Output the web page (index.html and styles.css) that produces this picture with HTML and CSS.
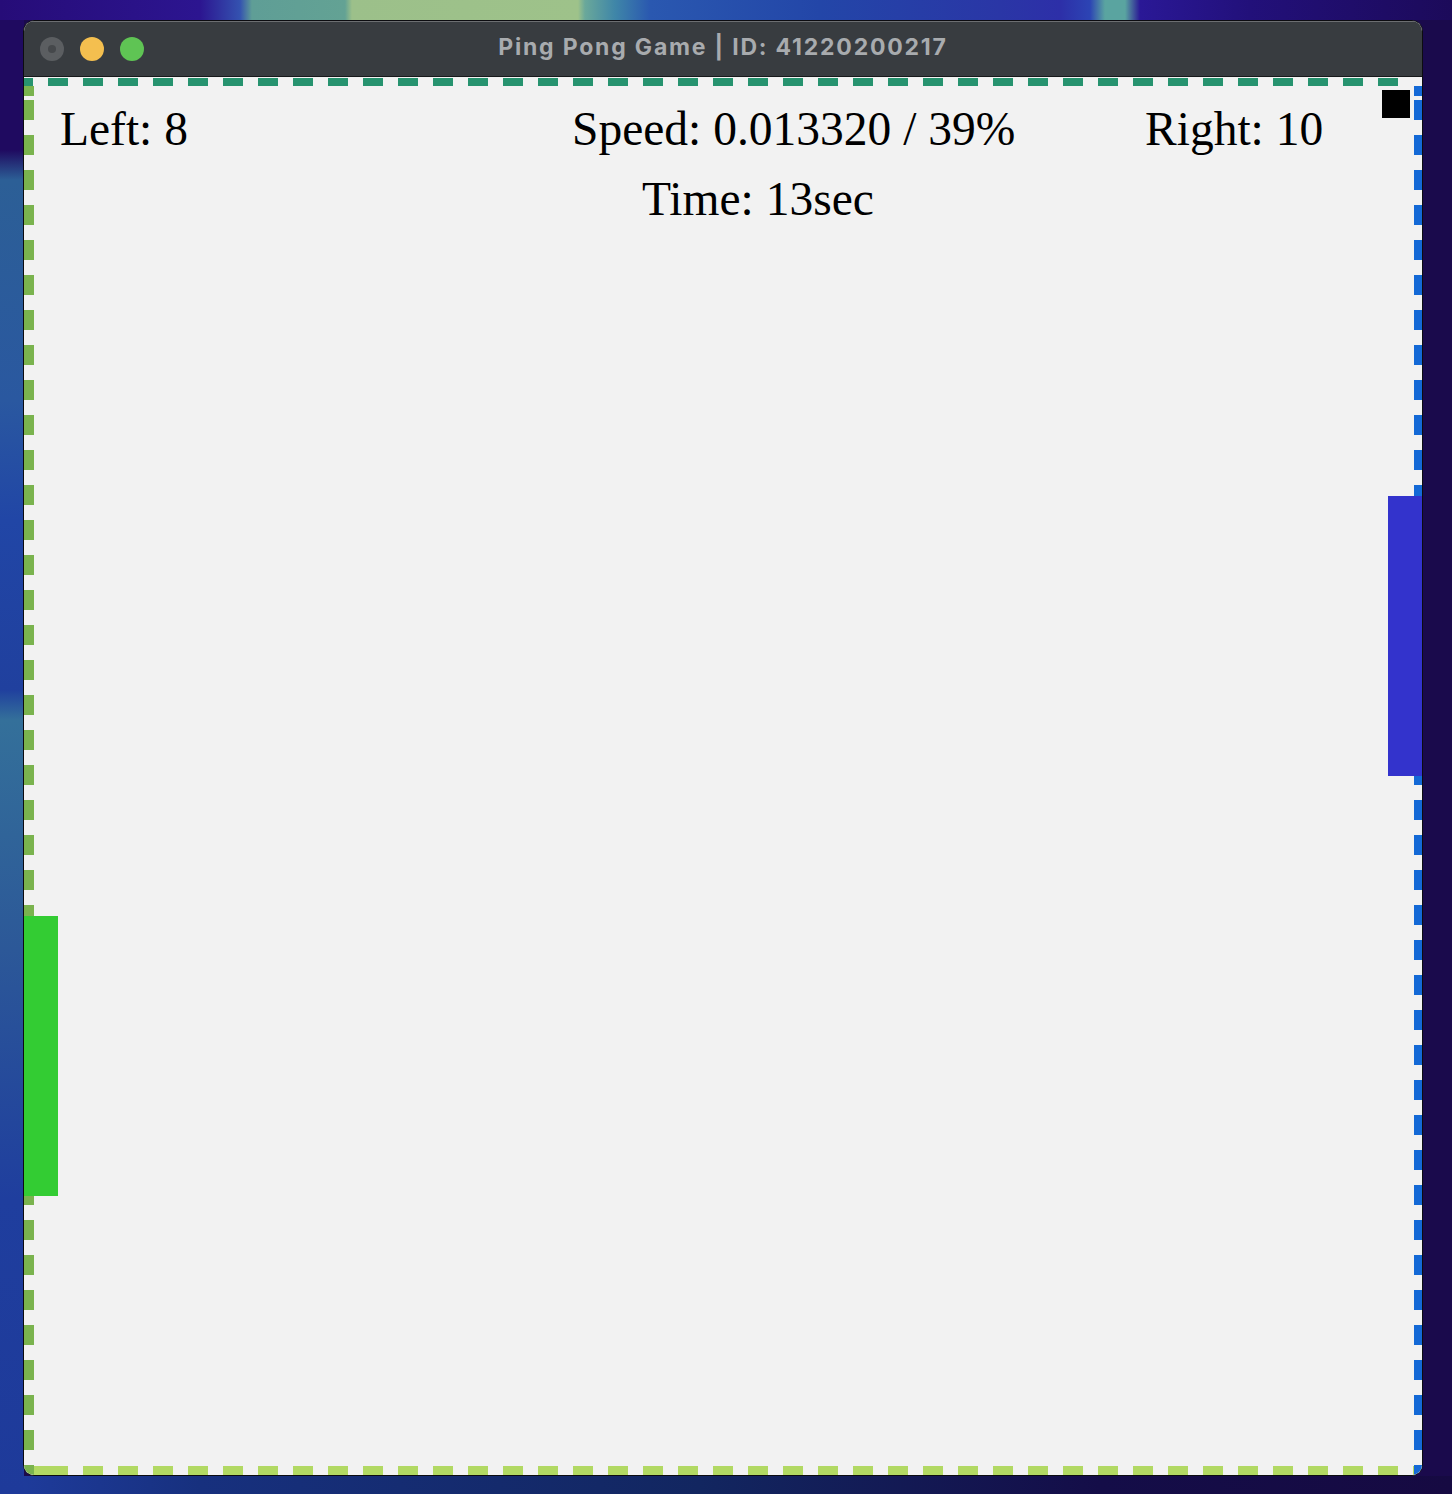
FILE: index.html
```html
<!DOCTYPE html>
<html lang="en">
<head>
<meta charset="utf-8">
<title>Ping Pong Game</title>
<link rel="stylesheet" href="styles.css">
</head>
<body>
<div class="window">
  <div class="titlebar">
    <div class="lights">
      <span class="light light-close"><span class="light-dot"></span></span>
      <span class="light light-min"></span>
      <span class="light light-max"></span>
    </div>
    <div class="title">Ping Pong Game | ID: 41220200217</div>
  </div>
  <div class="court">
    <div class="edge edge-top"></div>
    <div class="edge edge-left"></div>
    <div class="field">
      <div class="hud-row">
        <span class="hud-text">Left: 8</span>
        <span class="hud-text">Speed: 0.013320 / 39%</span>
        <span class="hud-text">Right: 10</span>
      </div>
      <div class="time-row hud-text">Time: 13sec</div>
    </div>
    <div class="edge edge-right"></div>
    <div class="edge edge-bottom"></div>
    <div class="paddle paddle-left"></div>
    <div class="paddle paddle-right"></div>
    <div class="ball"></div>
  </div>
</div>
</body>
</html>
```

FILE: styles.css
```css
html, body {
  margin: 0;
  padding: 0;
}

body {
  width: 1452px;
  height: 1494px;
  overflow: hidden;
  background-color: #1a0a4c;
  background-image:
    linear-gradient(90deg,
      #260c78 0px, #2c1590 200px, #3452b0 240px,
      #5f9e96 252px, #63a294 345px,
      #9cc08a 352px, #9ec28a 578px,
      #6aa89a 585px, #3f86a8 615px, #2a58b0 650px,
      #2346a8 820px, #2a36a6 1000px, #2d2fa8 1060px,
      #2c44b4 1090px, #5aa4a0 1105px, #5aa4a0 1125px,
      #2a1896 1140px, #22107a 1250px, #1c0a5a 1452px),
    linear-gradient(180deg,
      #1f0a60 0px, #1f0a60 150px, #2c5f96 180px,
      #2a58a0 400px, #2146a6 520px, #20409e 690px,
      #34709a 720px, #2c5898 950px, #1f3e9e 1200px, #1e3a9a 1494px),
    linear-gradient(90deg,
      #1f3c9e 0px, #17307e 200px, #122660 700px,
      #140d48 1100px, #160a42 1452px);
  background-size: 1452px 20px, 24px 1494px, 1452px 18px;
  background-position: 0 0, 0 0, 0 1476px;
  background-repeat: no-repeat;
}

.window {
  box-sizing: border-box;
  width: 1400px;
  height: 1456px;
  margin: 20px 0 0 23px;
  border: 1px solid #0c0c10;
  border-radius: 11px;
  overflow: hidden;
  display: flex;
  flex-direction: column;
  background: #f2f2f2;
}

.titlebar {
  height: 55px;
  flex: none;
  display: grid;
  align-items: center;
  background: #383c40;
  border-bottom: 1px solid #17191b;
  box-shadow: inset 0 1px 0 #6c6e71;
}

.lights {
  grid-area: 1 / 1;
  justify-self: start;
  display: flex;
  gap: 16px;
  padding-left: 16px;
}

.light {
  width: 24px;
  height: 24px;
  border-radius: 50%;
  display: flex;
  align-items: center;
  justify-content: center;
}

.light-close {
  background: #5b5e61;
}

.light-dot {
  width: 8px;
  height: 8px;
  border-radius: 50%;
  background: #45484b;
}

.light-min {
  background: #f4bf4f;
}

.light-max {
  background: #5fc454;
}

.title {
  grid-area: 1 / 1;
  justify-self: center;
  margin-top: -3px;
  font-family: Inter, "Noto Sans", sans-serif;
  font-weight: 700;
  font-size: 23px;
  color: #a8abae;
  letter-spacing: 1.8px;
}

.court {
  position: relative;
  flex: 1;
  display: grid;
  grid-template-columns: 10px 1fr 8px;
  grid-template-rows: 9px 1fr 9px;
  grid-template-areas:
    "top top ."
    "left field right"
    "left bottom right";
  background: #f2f2f2;
}

.edge-top {
  grid-area: top;
  background-image: repeating-linear-gradient(90deg, #27936f 0 20px, transparent 20px 35px);
  background-position: -11px 0;
  margin-right: 16px;
  margin-top: 1px;
}

.edge-bottom {
  grid-area: bottom;
  background-image: repeating-linear-gradient(90deg, #b2d963 0 20px, transparent 20px 35px);
  background-position: 14px 0;
}

.edge-left {
  grid-area: left;
  background-image: repeating-linear-gradient(180deg, #7ab34e 0 20px, transparent 20px 35px);
  background-position: 0 14px;
}

.edge-right {
  grid-area: right;
  background-image: repeating-linear-gradient(180deg, #1469d6 0 20px, transparent 20px 35px);
  background-position: 0 14px;
}

.field {
  grid-area: field;
  padding-top: 8px;
}

.hud-text {
  font-family: "Liberation Serif", "Times New Roman", serif;
  font-size: 47.5px;
  line-height: 70px;
  color: #000;
  white-space: nowrap;
}

.hud-row {
  display: grid;
  grid-template-columns: 512px 573px auto;
  padding-left: 26px;
}

.time-row {
  padding-left: 608px;
}

.paddle {
  position: absolute;
  width: 34px;
  height: 280px;
}

.paddle-left {
  left: 0;
  top: 839px;
  background: #33cc33;
}

.paddle-right {
  right: 0;
  top: 419px;
  background: #3333cc;
}

.ball {
  position: absolute;
  left: 1358px;
  top: 13px;
  width: 28px;
  height: 28px;
  background: #000;
}
```
